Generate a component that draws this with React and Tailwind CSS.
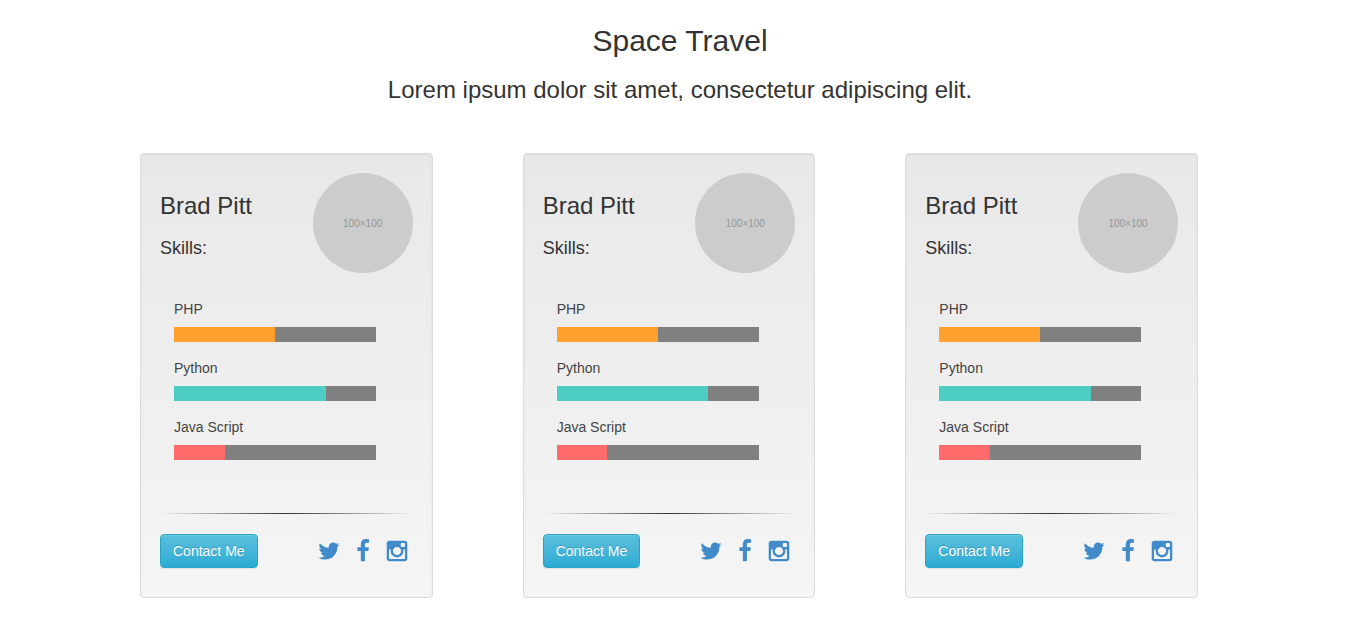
const skills = [
  { name: 'PHP', level: 50, color: 'bg-[#ff9f2d]' },
  { name: 'Python', level: 75, color: 'bg-[#4ecdc4]' },
  { name: 'Java Script', level: 25, color: 'bg-[#ff6b6b]' },
];

const people = [
  { id: 1, name: 'Brad Pitt' },
  { id: 2, name: 'Brad Pitt' },
  { id: 3, name: 'Brad Pitt' },
];

const socials = [
  {
    label: 'Twitter',
    path: 'M1684 408q-67 98-162 167 1 14 1 42 0 130-38 259.500t-115.500 248.500-184.500 210.500-258 146-323 54.500q-271 0-496-145 35 4 78 4 225 0 401-138-105-2-188-64.500t-114-159.500q33 5 61 5 43 0 85-11-112-23-185.500-111.500t-73.500-205.500v-4q68 38 146 41-66-44-105-115t-39-154q0-88 44-163 121 149 294.500 238.500t371.500 99.500q-8-38-8-74 0-134 94.500-228.500t228.500-94.500q140 0 236 102 109-21 205-78-37 115-142 178 93-10 186-50z',
  },
  {
    label: 'Facebook',
    path: 'M1343 12v264h-157q-86 0-116 36t-30 108v189h293l-39 296h-254v759h-306v-759h-255v-296h255v-218q0-186 104-288.500t277-102.500q147 0 228 12z',
  },
  {
    label: 'Instagram',
    path: 'M1490 1426v-648h-135q20 63 20 131 0 126-64 232.500t-174 168.500-240 62q-197 0-337-135.500t-140-327.500q0-68 20-131h-141v648q0 26 17.500 43.500t43.500 17.500h1069q25 0 43-17.500t18-43.500zm-284-533q0-124-90.500-211.500t-218.500-87.500q-127 0-217.500 87.500t-90.500 211.500 90.500 211.500 217.500 87.500q128 0 218.500-87.500t90.500-211.500zm284-360v-165q0-28-20-48.500t-49-20.500h-174q-29 0-49 20.500t-20 48.500v165q0 29 20 49t49 20h174q29 0 49-20t20-49zm174-208v1142q0 81-58 139t-139 58h-1142q-81 0-139-58t-58-139v-1142q0-81 58-139t139-58h1142q81 0 139 58t58 139z',
  },
];

function Skill({ name, level, color }) {
  return (
    <li>
      <p className="text-sm text-[#444444]">{name}</p>
      <div
        role="progressbar"
        aria-label={name}
        aria-valuenow={level}
        aria-valuemin={0}
        aria-valuemax={100}
        className="mt-2 h-[15px] bg-[#808080]"
      >
        <div className={`h-full ${color}`} style={{ width: `${level}%` }} />
      </div>
    </li>
  );
}

function ProfileCard({ name }) {
  return (
    <article className="rounded border border-[#dcdcdc] bg-linear-to-b from-[#e8e8e8] to-[#f5f5f5] px-[19px] pt-[19px] pb-[29px] shadow-[inset_0_1px_3px_rgba(0,0,0,0.05),0_1px_0_rgba(255,255,255,0.1)]">
      <header className="flex justify-between">
        <div className="pt-5">
          <h3 className="text-2xl leading-[26px]">{name}</h3>
          <h4 className="mt-[19px] text-lg leading-5">Skills:</h4>
        </div>
        <div className="flex size-[100px] items-center justify-center rounded-full bg-[#cccccc] font-['Liberation_Sans_Narrow','Liberation_Sans',sans-serif] text-[10px] text-[#969696]">
          100×100
        </div>
      </header>
      <ul className="mt-[26px] ml-[14px] flex w-4/5 flex-col gap-4">
        {skills.map((skill) => (
          <Skill key={skill.name} {...skill} />
        ))}
      </ul>
      <hr className="mt-[53px] h-px border-0 bg-linear-to-r from-transparent via-[#333333] to-transparent" />
      <footer className="mt-5 flex items-center justify-between">
        <button
          type="button"
          className="rounded border border-[#28a4c9] bg-linear-to-b from-[#5bc0de] to-[#2aabd2] px-3 py-1.5 text-sm text-white shadow-[inset_0_1px_0_rgba(255,255,255,0.15),0_1px_1px_rgba(0,0,0,0.075)] text-shadow-[0_-1px_0_rgba(0,0,0,0.2)]"
        >
          Contact Me
        </button>
        <nav className="flex gap-2.5 pr-1">
          {socials.map(({ label, path }) => (
            <a key={label} href="#" aria-label={label} className="text-[#428bca]">
              <svg viewBox="0 0 1792 1792" className="size-6 fill-current" aria-hidden="true">
                <path d={path} />
              </svg>
            </a>
          ))}
        </nav>
      </footer>
    </article>
  );
}

export default function App() {
  return (
    <main className="bg-white pb-8 font-['Liberation_Sans',Arial,sans-serif] text-[#333333]">
      <header className="pt-6 pr-[3px] text-center">
        <h1 className="text-3xl leading-[33px]">Space Travel</h1>
        <p className="mt-5 text-2xl leading-[26px]">
          Lorem ipsum dolor sit amet, consectetur adipiscing elit.
        </p>
      </header>
      <section className="mt-[50px] grid gap-[90px] px-6 lg:grid-cols-3 lg:pr-[165px] lg:pl-[140px]">
        {people.map((person) => (
          <ProfileCard key={person.id} name={person.name} />
        ))}
      </section>
    </main>
  );
}
